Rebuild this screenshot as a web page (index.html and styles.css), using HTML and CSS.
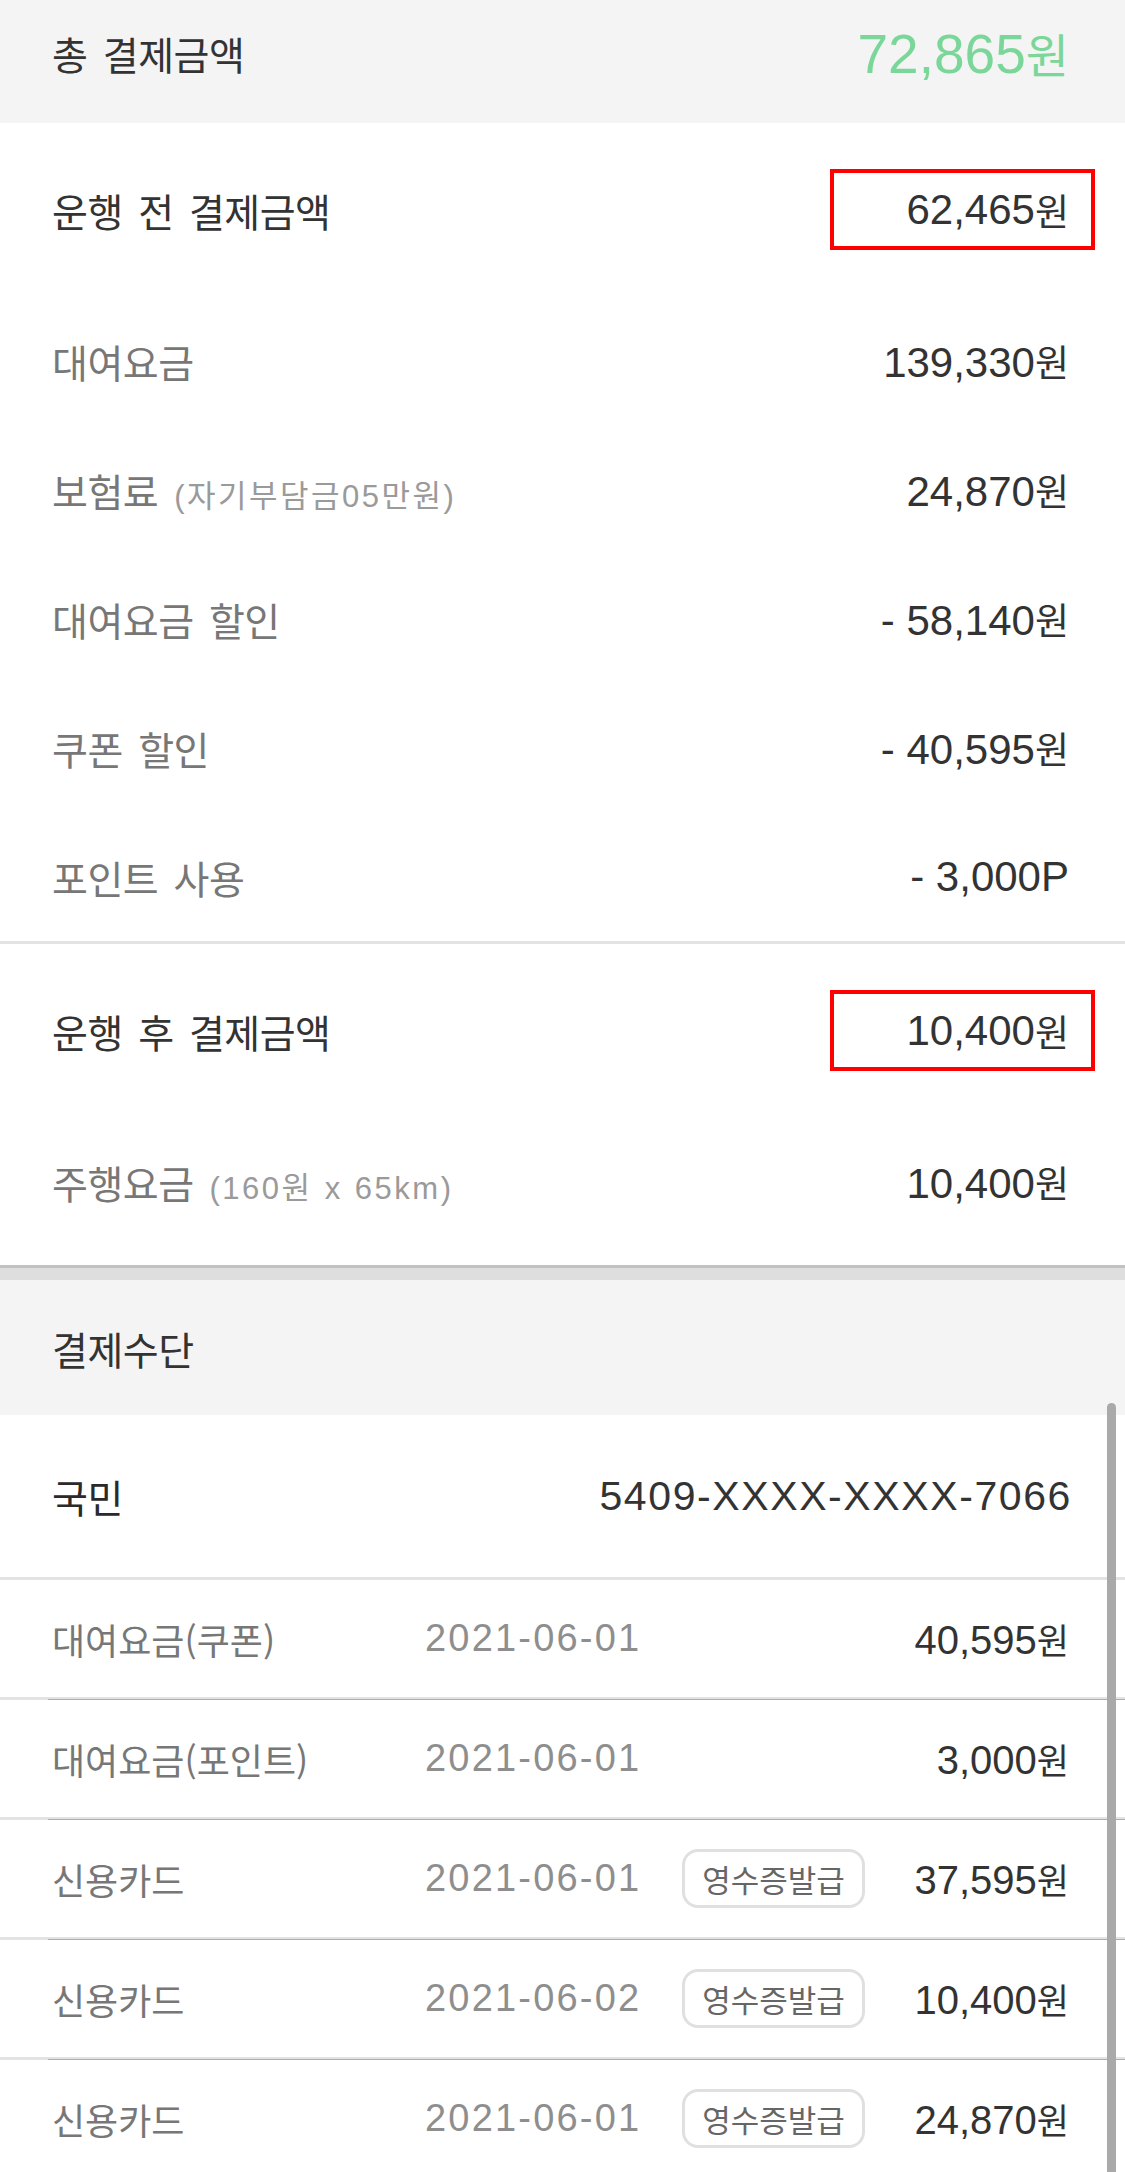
FILE: index.html
```html
<!DOCTYPE html>
<html lang="ko">
<head>
  <meta charset="UTF-8" />
  <meta name="viewport" content="width=device-width, initial-scale=1.0"/>
  <title>결제 내역</title>
  <link rel="stylesheet" href="styles.css">
</head>
<body>
  <div class="total">
    <span class="label">총 결제금액</span>
    <span class="total-amount">72,865<span class="unit">원</span></span>
  </div>

  <section class="block block-before">
    <div class="row row-main">
      <span class="label">운행 전 결제금액</span>
      <span class="amount boxed">62,465<span class="unit">원</span></span>
    </div>
    <div class="row">
      <span class="label muted">대여요금</span>
      <span class="amount">139,330<span class="unit">원</span></span>
    </div>
    <div class="row">
      <span class="label muted">보험료<span class="note">(자기부담금05만원)</span></span>
      <span class="amount">24,870<span class="unit">원</span></span>
    </div>
    <div class="row">
      <span class="label muted">대여요금 할인</span>
      <span class="amount">- 58,140<span class="unit">원</span></span>
    </div>
    <div class="row">
      <span class="label muted">쿠폰 할인</span>
      <span class="amount">- 40,595<span class="unit">원</span></span>
    </div>
    <div class="row">
      <span class="label muted">포인트 사용</span>
      <span class="amount">- 3,000P</span>
    </div>
  </section>

  <section class="block block-after">
    <div class="row row-main">
      <span class="label">운행 후 결제금액</span>
      <span class="amount boxed">10,400<span class="unit">원</span></span>
    </div>
    <div class="row">
      <span class="label muted">주행요금<span class="note">(160원 x 65km)</span></span>
      <span class="amount">10,400<span class="unit">원</span></span>
    </div>
  </section>

  <div class="pay-head">
    <span class="label">결제수단</span>
  </div>

  <div class="card-row">
    <span class="label dark">국민</span>
    <span class="card-no">5409-XXXX-XXXX-7066</span>
  </div>

  <div class="history">
    <div class="history-row">
      <span class="h-label">대여요금(쿠폰)</span>
      <span class="h-date">2021-06-01</span>
      <span></span>
      <span class="h-amount">40,595<span class="unit">원</span></span>
    </div>
    <div class="history-row">
      <span class="h-label">대여요금(포인트)</span>
      <span class="h-date">2021-06-01</span>
      <span></span>
      <span class="h-amount">3,000<span class="unit">원</span></span>
    </div>
    <div class="history-row">
      <span class="h-label">신용카드</span>
      <span class="h-date">2021-06-01</span>
      <button class="receipt">영수증발급</button>
      <span class="h-amount">37,595<span class="unit">원</span></span>
    </div>
    <div class="history-row">
      <span class="h-label">신용카드</span>
      <span class="h-date">2021-06-02</span>
      <button class="receipt">영수증발급</button>
      <span class="h-amount">10,400<span class="unit">원</span></span>
    </div>
    <div class="history-row">
      <span class="h-label">신용카드</span>
      <span class="h-date">2021-06-01</span>
      <button class="receipt">영수증발급</button>
      <span class="h-amount">24,870<span class="unit">원</span></span>
    </div>
  </div>

  <div class="scroll-indicator"></div>
</body>
</html>
```

FILE: styles.css
```css
* {
  padding: 0;
  margin: 0;
  box-sizing: border-box;
}
body {
  width: 1125px;
  height: 2172px;
  overflow: hidden;
  position: relative;
  background: #fff;
  color: #333;
  font-family: "Noto Sans CJK KR", sans-serif;
}

.label {
  font-size: 39px;
  letter-spacing: -0.5px;
  word-spacing: 5px;
  color: #333;
}
.label.muted {
  color: #777;
}
.label.dark {
  color: #2a2a2a;
}
.note {
  font-family: "Liberation Sans", "Noto Sans CJK KR", sans-serif;
  font-size: 31px;
  letter-spacing: 2.5px;
  word-spacing: 1px;
  color: #9a9a9a;
  margin-left: 16px;
}

.unit {
  font-family: "Noto Sans CJK KR", sans-serif;
  font-size: 37px;
  letter-spacing: 0;
}

/* top total */
.total {
  height: 123px;
  background: #f4f4f4;
  display: flex;
  align-items: center;
  justify-content: space-between;
  padding: 0 56px 18px 52px;
}
.total-amount {
  font-family: "Liberation Sans", sans-serif;
  font-size: 55px;
  color: #7bd699;
}
.total-amount .unit {
  font-size: 47px;
}

/* fare rows */
.block-before {
  border-bottom: 3px solid #e3e3e3;
}
.block-after {
  padding-bottom: 19px;
  border-bottom: 3px solid #c1c1c1;
}
.row {
  height: 129px;
  display: flex;
  align-items: center;
  justify-content: space-between;
  padding: 0 56px 0 52px;
}
.row-main {
  height: 173px;
}
.amount {
  font-family: "Liberation Sans", sans-serif;
  font-size: 42px;
  color: #333;
}
.boxed {
  width: 265px;
  height: 81px;
  border: 4px solid #ff0000;
  display: flex;
  align-items: center;
  justify-content: flex-end;
  padding-right: 22px;
  margin-right: -26px;
}
.boxed .unit {
  margin-top: 1px;
}

/* payment method */
.pay-head {
  height: 147px;
  border-top: 12px solid #dedede;
  background: #f4f4f4;
  display: flex;
  align-items: center;
  padding-left: 52px;
}
.card-row {
  height: 165px;
  border-bottom: 3px solid #e3e3e3;
  display: flex;
  align-items: center;
  justify-content: space-between;
  padding: 0 53px 0 52px;
}
.card-no {
  font-family: "Liberation Sans", sans-serif;
  font-size: 41px;
  letter-spacing: 1.6px;
  color: #333;
}

.history-row {
  height: 120px;
  border-bottom: 3px solid #e3e3e3;
  display: grid;
  grid-template-columns: 373px 257px 183px 1fr;
  align-items: center;
  padding: 0 56px 0 52px;
  position: relative;
}
.history-row::after {
  content: "";
  position: absolute;
  left: 48px;
  right: 0;
  bottom: -3px;
  height: 1px;
  background: #adadad;
}
.h-label {
  font-size: 36px;
  color: #777;
}
.h-date {
  font-family: "Liberation Sans", sans-serif;
  font-size: 38px;
  letter-spacing: 2.2px;
  color: #8e8e8e;
}
.h-amount {
  font-family: "Liberation Sans", sans-serif;
  font-size: 40px;
  color: #333;
  text-align: right;
}
.h-amount .unit {
  font-size: 35px;
}
.receipt {
  height: 59px;
  border: 3px solid #e0e0e0;
  border-radius: 16px;
  background: #fff;
  font-family: "Noto Sans CJK KR", sans-serif;
  font-size: 31px;
  color: #666;
}

.scroll-indicator {
  position: absolute;
  right: 9px;
  top: 1403px;
  width: 9px;
  height: 800px;
  border-radius: 5px;
  background: #a9a9a9;
}
```
